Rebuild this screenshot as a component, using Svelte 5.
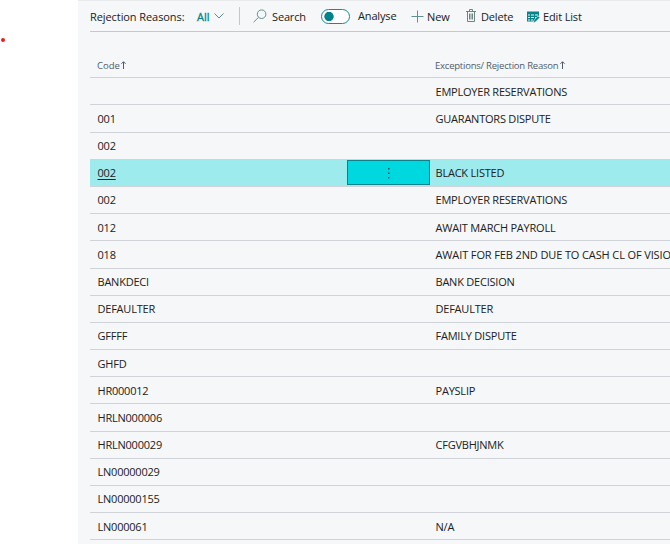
<script>
  const rows = [
    { code: '', reason: 'EMPLOYER RESERVATIONS', height: 27, low: true },
    { code: '001', reason: 'GUARANTORS DISPUTE', height: 28 },
    { code: '002', reason: '', height: 27 },
    { code: '002', reason: 'BLACK LISTED', height: 27, selected: true },
    { code: '002', reason: 'EMPLOYER RESERVATIONS', height: 27 },
    { code: '012', reason: 'AWAIT MARCH PAYROLL', height: 27, low: true },
    { code: '018', reason: 'AWAIT FOR FEB 2ND DUE TO CASH CL OF VISION', height: 28, long: true },
    { code: 'BANKDECI', reason: 'BANK DECISION', height: 27 },
    { code: 'DEFAULTER', reason: 'DEFAULTER', height: 27 },
    { code: 'GFFFF', reason: 'FAMILY DISPUTE', height: 27 },
    { code: 'GHFD', reason: '', height: 27, low: true },
    { code: 'HR000012', reason: 'PAYSLIP', height: 27, low: true },
    { code: 'HRLN000006', reason: '', height: 28 },
    { code: 'HRLN000029', reason: 'CFGVBHJNMK', height: 27 },
    { code: 'LN00000029', reason: '', height: 27 },
    { code: 'LN00000155', reason: '', height: 27 },
    { code: 'LN000061', reason: 'N/A', height: 27, low: true }
  ];
</script>

{#snippet arrow()}
  <svg class="arrow" width="5" height="8" viewBox="0 0 5 8"><path d="M2.5 8V1M.4 2.8 2.5.7l2.1 2.1" /></svg>
{/snippet}

<div class="page">
  <aside><i class="dot"></i></aside>
  <main>
    <header>
      <span class="title">Rejection Reasons:</span>
      <span class="all">All</span>
      <svg class="chev" width="10" height="6" viewBox="0 0 10 6"><path d="M.5.5 5 5 9.5.5" /></svg>
      <i class="sep"></i>
      <svg class="search" width="14" height="14" viewBox="0 0 14 14"><circle cx="8.6" cy="5.2" r="4.3" /><path d="M5.5 8.3.6 13.2" /></svg>
      <span class="t-search">Search</span>
      <i class="toggle"></i>
      <span class="t-analyse">Analyse</span>
      <svg class="plus" width="13" height="13" viewBox="0 0 13 13"><path d="M6.5.5v12M.5 6.5h12" /></svg>
      <span class="t-new">New</span>
      <svg class="trash" width="10" height="13" viewBox="0 0 10 13"><path d="M0 2.5h10M3.5 2V.5h3V2M1.5 2.5v10h7v-10M3.5 4.5v6M5 4.5v6M6.5 4.5v6" /></svg>
      <span class="t-delete">Delete</span>
      <svg class="edit" width="13" height="12" viewBox="0 0 13 12">
        <path class="fill" d="M0 .5h12v4L7 9.5l-.5 1H0z" />
        <path class="lines" d="M1 4h2M4 4h3M8 4h3M1 6.5h2M4 6.5h3M8 6.5h1M1 9h2M4 9h2" />
        <path class="pen" d="m6.3 12 .7-2.9 4.200-4.2 1.7 1.7-4.2 4.200z" />
      </svg>
      <span class="t-edit">Edit List</span>
    </header>
    <section>
      <div class="heads">
        <div class="code"><span>Code</span>{@render arrow()}</div>
        <div class="reason"><span>Exceptions/ Rejection Reason</span>{@render arrow()}</div>
      </div>
      {#each rows as { code, reason, height, selected, low, long }}
        <div class="row" class:selected class:low class:long style:height="{height}px">
          <div class="code"><span>{code}</span></div>
          <div class="menu">
            {#if selected}<svg width="2" height="12" viewBox="0 0 2 12"><path d="M0 1h1.5v1.5H0zM0 5.5h1.5V7H0zM0 10h1.5v1.5H0z" /></svg>{/if}
          </div>
          <div class="reason"><span>{reason}</span></div>
        </div>
      {/each}
    </section>
  </main>
</div>

<style>
  .page {
    display: flex;
    width: 670px;
    height: 544px;
    overflow: hidden;
    background: #fff;
    color: #212121;
    font: 11px/15px "Open Sans", "Noto Sans", sans-serif;
    white-space: nowrap;
  }
  aside { width: 78px; flex: none; padding: 38px 0 0 1px; box-sizing: border-box; }
  .dot { display: block; width: 4px; height: 4px; border-radius: 50%; background: #ed1c24; }
  main {
    width: 592px;
    height: 544px;
    box-sizing: border-box;
    padding-left: 12px;
    background: #f5f7f9;
    border-top: 1px solid #e8eaec;
    overflow: hidden;
  }
  header {
    display: flex;
    align-items: center;
    height: 31px;
    box-sizing: border-box;
    border-bottom: 1px solid #c6c8ca;
  }
  header > * { flex: none; }
  header span { letter-spacing: -.15px; }
  svg { display: block; fill: none; stroke: #61908f; }
  .title { width: 107px; }
  header .title { letter-spacing: -.08px; }
  .all { width: 17px; color: #00838a; }
  header .all { letter-spacing: 0; -webkit-text-stroke: .3px #00838a; }
  .chev { stroke: #5b8995; }
  .sep { width: 1px; height: 18px; margin: 0 13px 0 15px; background: #c4c8cb; }
  .search { margin-right: 5px; }
  .t-search { width: 49px; }
  .toggle {
    width: 29px;
    height: 15px;
    box-sizing: border-box;
    border: 1px solid #168b91;
    border-radius: 8px;
    background: radial-gradient(circle at 7px 6.5px, #00838a 4.3px, #fff 5px);
    margin-right: 8px;
  }
  .t-analyse { width: 53px; position: relative; top: -1px; }
  .plus { margin-right: 3px; }
  .t-new { width: 39px; }
  .trash { stroke: #6c8582; margin-right: 5px; position: relative; top: -1px; }
  .t-delete { width: 46px; }
  .edit { margin-right: 3px; position: relative; top: .5px; }
  .fill { fill: #08858c; stroke: none; }
  .lines { stroke: #f5f7f9; }
  .pen { fill: #08858c; stroke: #f5f7f9; stroke-width: .6; }
  .heads {
    display: flex;
    height: 46px;
    box-sizing: border-box;
    padding-top: 26px;
    border-bottom: 1px solid #d0d3d8;
    color: #505c6d;
    font-size: 9.5px;
    letter-spacing: -.22px;
  }
  .heads > div { display: flex; gap: 2px; }
  .heads .code { width: 338px; padding-left: 7px; letter-spacing: 0; }
  .heads .code .arrow { margin-left: -.5px; }
  .arrow { stroke: #505c6d; margin-top: 3px; }
  .row {
    display: flex;
    align-items: center;
    box-sizing: border-box;
    border-bottom: 1px solid #d0d3d8;
    letter-spacing: -.22px;
  }
  .row span { position: relative; top: -.3px; }
  .low span { top: .7px; }
  .long .reason { letter-spacing: -.12px; }
  .code, .menu { box-sizing: border-box; flex: none; }
  .row .code { width: 257px; padding-left: 7.5px; }
  .menu { width: 83px; height: 26px; display: flex; align-items: center; justify-content: center; }
  .reason { padding-left: 7px; }
  .row .reason { padding-left: 5.5px; }
  .selected { background: #9eebee; align-items: flex-start; }
  .selected .menu { background: #00d8df; border: 1px solid #08858c; height: 25px; }
  .selected .code, .selected .reason { padding-top: 5.5px; }
  .selected .code span { text-decoration: underline; text-underline-offset: 2px; }
  .menu svg { fill: #12565b; stroke: none; }
</style>
